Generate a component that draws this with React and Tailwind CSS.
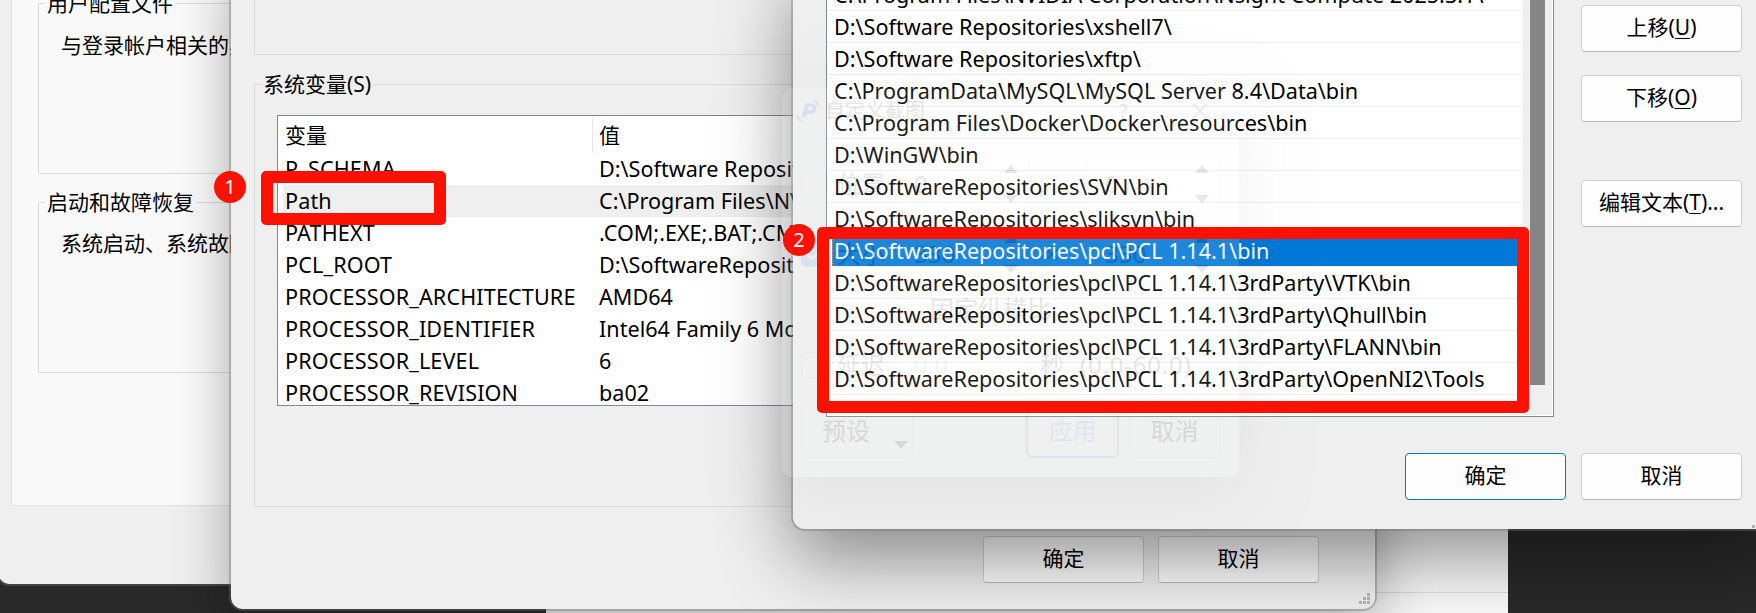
const FONT = "font-['Noto_Sans','Noto_Sans_CJK_SC',sans-serif]";

const variables = [
  { name: 'P_SCHEMA', value: 'D:\\Software Repositories' },
  { name: 'Path', value: 'C:\\Program Files\\NVIDIA', selected: true },
  { name: 'PATHEXT', value: '.COM;.EXE;.BAT;.CMD' },
  { name: 'PCL_ROOT', value: 'D:\\SoftwareRepositories' },
  { name: 'PROCESSOR_ARCHITECTURE', value: 'AMD64' },
  { name: 'PROCESSOR_IDENTIFIER', value: 'Intel64 Family 6 Model' },
  { name: 'PROCESSOR_LEVEL', value: '6' },
  { name: 'PROCESSOR_REVISION', value: 'ba02' },
];

const paths = [
  'C:\\Program Files\\NVIDIA Corporation\\Nsight Compute 2025.3.1\\',
  'D:\\Software Repositories\\xshell7\\',
  'D:\\Software Repositories\\xftp\\',
  'C:\\ProgramData\\MySQL\\MySQL Server 8.4\\Data\\bin',
  'C:\\Program Files\\Docker\\Docker\\resources\\bin',
  'D:\\WinGW\\bin',
  'D:\\SoftwareRepositories\\SVN\\bin',
  'D:\\SoftwareRepositories\\sliksvn\\bin',
  'D:\\SoftwareRepositories\\pcl\\PCL 1.14.1\\bin',
  'D:\\SoftwareRepositories\\pcl\\PCL 1.14.1\\3rdParty\\VTK\\bin',
  'D:\\SoftwareRepositories\\pcl\\PCL 1.14.1\\3rdParty\\Qhull\\bin',
  'D:\\SoftwareRepositories\\pcl\\PCL 1.14.1\\3rdParty\\FLANN\\bin',
  'D:\\SoftwareRepositories\\pcl\\PCL 1.14.1\\3rdParty\\OpenNI2\\Tools',
];
const SELECTED_PATH = 8;

function Button({ children, primary, className = '' }) {
  return (
    <button
      className={`flex h-[47px] w-[161px] shrink-0 items-center justify-center rounded-[4px] border bg-[#fdfdfd] pb-px ${
        primary ? 'border-[#0078d4]' : 'border-[#d0d0d0] border-b-[#b9b9b9]'
      } ${className}`}
    >
      <span>{children}</span>
    </button>
  );
}

function Key({ children }) {
  return <span className="underline decoration-1 underline-offset-[3px]">{children}</span>;
}

function GroupBox({ title, className = '', children }) {
  return (
    <fieldset className={`border border-[#dcdcdc] pl-[6px] ${className}`}>
      <legend className="h-[28px] px-[2px] leading-[28px]">{title}</legend>
      {children}
    </fieldset>
  );
}

function Grip({ className }) {
  return (
    <svg className={`absolute ${className}`} width="11" height="11" fill="#b4b4b4">
      <path d="M8 0h3v3h-3zM4 4h3v3h-3zM8 4h3v3h-3zM0 8h3v3h-3zM4 8h3v3h-3zM8 8h3v3h-3z" />
    </svg>
  );
}

function SystemProperties() {
  return (
    <section className="absolute -left-px -top-10 h-[624px] w-[700px] rounded-[10px] bg-[#efefef] pl-3 [box-shadow:0_0_0_2px_rgba(115,115,115,0.385)]">
      <div className="flex h-[546px] w-[640px] flex-col gap-[14px] border border-[#e2e2e2] bg-[#f9f9f9] pl-[26px] pt-[28px]">
        <GroupBox title="用户配置文件" className="h-[185px] w-[560px]">
          <p className="pl-[16px] pt-[14px] leading-[28px]">与登录帐户相关的桌面设置</p>
        </GroupBox>
        <GroupBox title="启动和故障恢复" className="h-[185px] w-[560px]">
          <p className="pl-[16px] pt-[13px] leading-[28px]">系统启动、系统故障和调试信息</p>
        </GroupBox>
      </div>
    </section>
  );
}

function EnvironmentVariables() {
  return (
    <section className="absolute -top-10 left-[231px] h-[649px] w-[1144px] rounded-[12px] bg-[#efefef] pl-[23px] [box-shadow:0_0_0_2px_rgba(115,115,115,0.385),0_16px_56px_rgba(0,0,0,0.33)]">
      <div className="h-[95px] w-[1096px] border border-[#dcdcdc]" />
      <GroupBox title="系统变量(S)" className="mt-[15px] h-[437px] w-[1096px]">
        <div className="ml-[16px] mt-[17px] h-[291px] w-[1050px] overflow-hidden border border-[#828790] bg-white">
          <div className="flex h-[37px] leading-[36px]">
            <span className="mt-px w-[315px] border-r border-[#e5e5e5] pl-[7px]">变量</span>
            <span className="pl-[6px] pt-px">值</span>
          </div>
          {variables.map((v) => (
            <div key={v.name} className={`ml-[5px] flex h-8 text-[21.6px] leading-[31px] ${v.selected ? 'bg-[#efefef]' : ''}`}>
              <span className="w-[316px] pl-[2px] tracking-[0.13px]">{v.name}</span>
              <span className="whitespace-nowrap">{v.value}</span>
            </div>
          ))}
        </div>
      </GroupBox>
      <div className="ml-[729px] mt-[29px] flex gap-[14px]">
        <Button>确定</Button>
        <Button>取消</Button>
      </div>
      <Grip className="bottom-[5px] right-[5px]" />
    </section>
  );
}

function EditPath() {
  return (
    <section className="absolute -top-10 left-[793px] h-[569px] w-[980px] rounded-[12px] bg-[#efefef] pl-[33px] [box-shadow:0_0_0_2px_rgba(115,115,115,0.385),0_30px_72px_rgba(0,0,0,0.42)]">
      <div className="flex">
        <div className="flex h-[457px] w-[728px] shrink-0 justify-between border border-[#828790] bg-white pr-px">
          <div className="w-[695px] pl-px pt-[18px]">
            {paths.map((p, i) => (
              <div key={p} className="h-8 border-b border-[#ededed] pl-[4px] text-[21.6px] leading-[31px]">
                <div
                  className={`h-[31px] whitespace-nowrap pl-[2px] ${
                    i === SELECTED_PATH ? 'border-l border-dotted border-[#ff8728] bg-[#0078d7] pl-px text-white' : ''
                  }`}
                >
                  {p}
                </div>
              </div>
            ))}
          </div>
          <div className="mb-px w-[29px] bg-[#efefef] pl-[7px]">
            <div className="h-[424px] w-[15px] bg-[#868686]" />
          </div>
        </div>
        <div className="ml-[27px] flex flex-col pt-[45px]">
          <Button>上移(<Key>U</Key>)</Button>
          <Button className="mt-[23px]">下移(<Key>O</Key>)</Button>
          <Button className="mt-[58px]">编辑文本(<Key>T</Key>)...</Button>
        </div>
      </div>
      <div className="ml-[579px] mt-[36px] flex gap-[15px]">
        <Button primary>确定</Button>
        <Button>取消</Button>
      </div>
      <span className="absolute bottom-px left-[959px] size-[3px] bg-[#b4b4b4]" />
    </section>
  );
}

function Arrow({ up }) {
  return (
    <svg width="14" height="8" fill="#333">
      <path d={up ? 'M7 0L14 8H0z' : 'M0 0H14L7 8z'} />
    </svg>
  );
}

function Spin({ value, disabled }) {
  return (
    <div className="flex h-[57px] w-[134px] items-center justify-between rounded-[6px] border border-[#dcdcdc] bg-white pl-[18px] pr-[10px]">
      <span className={disabled ? 'text-[#aaa]' : ''}>{value}</span>
      <span className="flex flex-col gap-[22px]">
        {!disabled && <Arrow up />}
        {!disabled && <Arrow />}
      </span>
    </div>
  );
}

function Check({ checked, className = '' }) {
  return (
    <span
      className={`flex size-[26px] shrink-0 items-center justify-center rounded-[5px] border ${
        checked ? 'border-[#2f80ed] bg-[#2f80ed]' : 'border-[#c4c4c4] bg-white'
      } ${className}`}
    >
      {checked && (
        <svg width="16" height="12" fill="none" stroke="#fff" strokeWidth="2.5">
          <path d="M1 6l5 5L15 1" />
        </svg>
      )}
    </span>
  );
}

function FadingCaptureDialog() {
  return (
    <section className="absolute left-[782px] top-[88px] h-[389px] w-[457px] rounded-[10px] bg-[#f7f8fa] text-[24px] text-[#222] opacity-[0.11] [box-shadow:0_18px_70px_rgba(0,0,0,0.45)]">
      <header className="flex h-[46px] items-center pl-[14px] text-[20px]">
        <svg width="24" height="24" fill="none" stroke="#1f6feb">
          <path d="M8 18L11 6h4a3.5 3.5 0 0 1 0 7h-5" strokeWidth="3.5" />
          <path d="M18 2a5 5 0 0 1 4 5M2 16a5 5 0 0 0 4 6" strokeWidth="2" />
        </svg>
        <span className="ml-[5px] w-[294px]">自定义截图</span>
        <span className="w-[73px]">?</span>
        <svg width="16" height="16" fill="none" stroke="#333" strokeWidth="1.6">
          <path d="M1 1l14 14M15 1L1 15" />
        </svg>
      </header>
      <div className="flex flex-col pl-[19px]">
        <div className="mt-[21px] flex h-[57px] items-center">
          <Check />
          <span className="ml-[10px] w-[58px]">位置</span>
          <Spin value="0" />
          <span className="w-[57px] pl-[10px]">,</span>
          <Spin value="0" />
        </div>
        <div className="mt-[13px] flex h-[57px] items-center">
          <Check checked />
          <span className="ml-[10px] w-[58px]">大小</span>
          <Spin value="330" />
          <span className="w-[57px] pl-[16px]">×</span>
          <Spin value="330" />
        </div>
        <div className="ml-[94px] mt-[4px] flex h-[46px] items-center">
          <Check />
          <span className="ml-[9px] tracking-[0.3px]">固定纵横比</span>
        </div>
        <div className="mt-[4px] flex h-[57px] items-center">
          <Check />
          <span className="ml-[10px] w-[58px]">延迟</span>
          <Spin value="0.0" disabled />
          <span className="ml-[11px] flex gap-[16px]"><span>秒</span><span className="tracking-[0.8px]">(0.0-60.0)</span></span>
        </div>
        <div className="mt-[11px] flex h-[54px]">
          <span className="flex w-[112px] items-center justify-between rounded-[6px] border border-[#d0d0d0] pl-[20px] pr-[4px]">
            预设
            <span className="pt-[28px]"><Arrow /></span>
          </span>
          <span className="ml-[113px] flex w-[93px] items-center justify-center rounded-[6px] border-2 border-[#5a9cff] text-[#5a9cff]">应用</span>
          <span className="ml-[10px] flex w-[91px] items-center justify-center rounded-[6px] border border-[#d0d0d0]">取消</span>
        </div>
      </div>
    </section>
  );
}

function Badge({ children, className }) {
  return (
    <span className={`absolute flex size-8 items-center justify-center rounded-full bg-[#ff1100] text-[20px] text-white ${className}`}>
      {children}
    </span>
  );
}

export default function App() {
  return (
    <main className={`relative h-[613px] w-[1756px] overflow-hidden bg-[#292929] text-[21px] text-black ${FONT}`}>
      <div className="absolute left-[546px] top-0 h-[613px] w-[962px] bg-[#fafafa]">
        <div className="h-[593px] border-b border-[#dedede]" />
      </div>
      <SystemProperties />
      <EnvironmentVariables />
      <EditPath />
      <FadingCaptureDialog />
      <div className="absolute left-[261px] top-[171px] h-[54px] w-[185px] rounded-[5px] border-[12px] border-[#ff1100]" />
      <Badge className="left-[214px] top-[171px]">1</Badge>
      <div className="absolute left-[817px] top-[227px] h-[186px] w-[712px] rounded-[5px] border-[12px] border-[#ff1100]" />
      <Badge className="left-[783px] top-[224px]">2</Badge>
    </main>
  );
}
